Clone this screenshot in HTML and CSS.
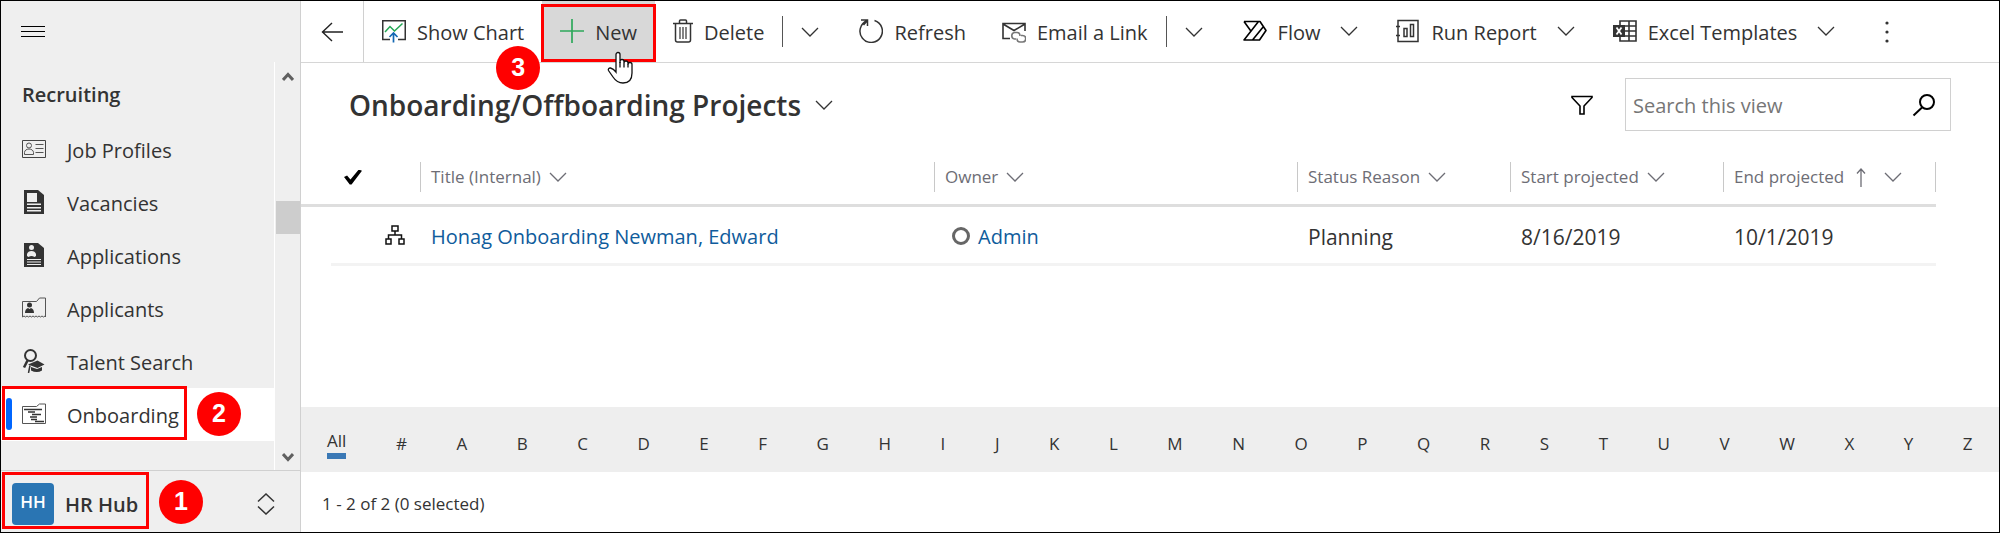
FILE: index.html
```html
<!DOCTYPE html>
<html lang="en">
<head>
  <meta charset="UTF-8">
  <meta name="viewport" content="width=device-width, initial-scale=1.0">
  <title>Onboarding/Offboarding Projects</title>
  <link rel="stylesheet" href="styles.css">
</head>
<body>
  <!-- Shared icons -->
  <svg class="sprite" aria-hidden="true">
    <symbol id="chevron" viewBox="0 0 18 10">
      <path d="M1 1l8 8 8-8" fill="none" stroke="currentColor" stroke-width="1.3"/>
    </symbol>
  </svg>

  <aside class="sidebar">
    <button class="menu-button" aria-label="Toggle navigation">
      <svg width="24" height="11" viewBox="0 0 24 11"><path d="M0 .5h24M0 5.5h24M0 10.5h24" stroke="#000"/></svg>
    </button>

    <div class="nav-scroll">
      <nav class="nav">
        <h2 class="nav-title">Recruiting</h2>
        <a class="nav-item" href="#">
          <svg class="nav-icon" viewBox="0 0 24 24" fill="none" stroke="#555">
            <path d="M.5 3.5h23v17H.5z" stroke="#444"/>
            <circle cx="7" cy="8.5" r="2.5"/>
            <path d="M2.5 17.5v-2c0-2 2-3.5 4.500-3.500s4.500 1.500 4.500 3.500v2zM13.500 7.500h8M13.500 11.500h8M13.500 15.500h8"/>
          </svg>
          Job Profiles
        </a>
        <a class="nav-item" href="#">
          <svg class="nav-icon" viewBox="0 0 24 24">
            <path d="M2 0h14l6 5v19H2z" fill="#333"/>
            <path d="M5 3h10v9H5zM5 13.500h14v1.500H5zM5 17h14v1.500H5zM5 20h14v1.500H5z" fill="#efefef"/>
          </svg>
          Vacancies
        </a>
        <a class="nav-item" href="#">
          <svg class="nav-icon" viewBox="0 0 24 24">
            <path d="M2 0h14l6 5v19H2z" fill="#333"/>
            <circle cx="9.500" cy="4.500" r="2.500" fill="#efefef"/>
            <path d="M5 13V11q1-3 4.500-3t4.500 3v2l-1.500 1q-3-2-6 0zM5 16h14v1H5zM5 18.500h14v1H5zM5 21h14v1H5z" fill="#efefef"/>
          </svg>
          Applications
        </a>
        <a class="nav-item" href="#">
          <svg class="nav-icon" viewBox="0 0 24 24">
            <path d="M.5 21V5.500h14l3-3.500h6v19" fill="none" stroke="#555"/>
            <path d="M.5 21l1.500-1 1.500 1 1.500-1 1.500 1 1.500-1 1.500 1 1.500-1 1.500 1 1.500-1 1.500 1 1.500-1 1.500 1 1.500-1 1.500 1 1.500-1" fill="none" stroke="#555"/>
            <circle cx="7.500" cy="9" r="2.500" fill="#333"/>
            <path d="M3 17q0-4 3-5l1.500 1 1.500-1q3 1 3 5z" fill="#333"/>
          </svg>
          Applicants
        </a>
        <a class="nav-item" href="#">
          <svg class="nav-icon" viewBox="0 0 24 24">
            <circle cx="8.500" cy="6.500" r="5.500" fill="none" stroke="#333" stroke-width="2"/>
            <path d="M5.500 11.500L2 18.500" stroke="#333" stroke-width="2.500"/>
            <path d="M6 15.500l9.500-4 7 4-7 3.500zM9 18v3.500q6 3 11 0V18l-5 2z" fill="#333"/>
            <path d="M8 16.500L6.500 24" stroke="#333" stroke-width="1.500"/>
          </svg>
          Talent Search
        </a>
        <a class="nav-item selected" href="#">
          <svg class="nav-icon" viewBox="0 0 24 24">
            <path d="M.5 21.500v-17h14l3-2.500h6v19.500z" fill="none" stroke="#555"/>
            <path d="M2 7.500h18M6 10h7M10 12.500h9M8 15h7M9 17.500h6M13 19.500h9" stroke="#333" stroke-width="1.500"/>
          </svg>
          Onboarding
          <span class="marker"></span>
          <span class="step step-nav">2</span>
        </a>
      </nav>
      <div class="scrollbar">
        <svg width="12" height="10" viewBox="0 0 12 10"><path d="M1 8l5-5.500L11 8" fill="none" stroke="#606060" stroke-width="3"/></svg>
        <span class="thumb"></span>
        <svg width="12" height="10" viewBox="0 0 12 10"><path d="M1 2l5 5.500L11 2" fill="none" stroke="#606060" stroke-width="3"/></svg>
      </div>
    </div>

    <button class="area-switch">
      <span class="area-tile">HH</span>
      <span class="area-name">HR Hub</span>
      <svg class="area-arrows" width="18" height="22" viewBox="0 0 18 22"><path d="M1 8.500l8-7.500 8 7.500M1 13.500l8 7.500 8-7.500" fill="none" stroke="#333" stroke-width="1.500"/></svg>
      <span class="marker"></span>
      <span class="step step-area">1</span>
    </button>
  </aside>

  <main class="content">
    <div class="toolbar">
      <button class="back" aria-label="Back">
        <svg width="22" height="20" viewBox="0 0 22 20"><path d="M22 10H1M11 1L1.500 10l9.500 9" fill="none" stroke="#222" stroke-width="1.400"/></svg>
      </button>
      <button class="command">
        <svg class="icon" viewBox="0 0 24 24" fill="none">
          <path d="M8 20.500H.75V1.750h22.500V20.500H16" stroke="#333" stroke-width="1.500"/>
          <path d="M3 13l5-5.500 4.500 4.500 8-7.500" stroke="#22a653" stroke-width="1.500"/>
          <path d="M11.500 23.500v-9M7.500 18l4-4 4 4" stroke="#1468b3" stroke-width="1.700"/>
        </svg>
        Show Chart
      </button>
      <button class="command active">
        <svg class="icon" viewBox="0 0 24 24"><path d="M12 0v24M0 12h24" stroke="#2ea85b" stroke-width="1.700"/></svg>
        New
        <span class="marker"></span>
        <span class="step step-new">3</span>
        <svg class="pointer" width="26" height="33" viewBox="0 0 26 33">
          <path d="M9 20V3.500a2 2 0 0 1 4 0V12v-1.500a2 2 0 0 1 4 0V12a2 2 0 0 1 4 0v1.500a2 2 0 0 1 4 0V22c0 6-3 10-9 10-5 0-8-3-10-6l-4.500-6.500c-.7-1.500.5-2.700 2-2.500 2.500.5 4 2 5.500 4z" fill="#fff" stroke="#111" stroke-width="1.300"/>
          <path d="M13 11v5.500M17 12v4.500M21 13v3.500" stroke="#111" stroke-width="1.300"/>
        </svg>
      </button>
      <button class="command">
        <svg class="icon icon-narrow" viewBox="0 0 20 24" fill="none" stroke="#333" stroke-width="1.500">
          <path d="M0 4.500h20M6.500 4V2q0-1 1-1h5q1 0 1 1v2M2.500 5v16q0 2 2 2h11q2 0 2-2V5"/>
          <path d="M7 8v12M10 8v12M13 8v12" stroke-width="1.200"/>
        </svg>
        Delete
      </button>
      <span class="divider"></span>
      <button class="split" aria-label="More delete options"><svg class="chevron"><use href="#chevron"/></svg></button>
      <button class="command">
        <svg class="icon" viewBox="0 0 24 24" fill="none" stroke="#333" stroke-width="1.500">
          <path d="M15.500 1.500A11.200 11.200 0 1 1 8 1.800M2 1h6.500v6M8.500 1.500L4.500 6"/>
        </svg>
        Refresh
      </button>
      <button class="command">
        <svg class="icon" viewBox="0 0 24 24" fill="none" stroke="#333" stroke-width="1.600">
          <path d="M8 19.500H1V4.500h22V12M1 5l11 6.500L23 5"/>
          <path d="M14 20h-1.500a3.300 3.300 0 0 1 0-6.500H15q3 0 3 3.500M19 16.500h1.500a3.200 3.200 0 0 1 0 6.500H18q-3 0-3-3.500" stroke="#777"/>
        </svg>
        Email a Link
      </button>
      <span class="divider"></span>
      <button class="split" aria-label="More email options"><svg class="chevron"><use href="#chevron"/></svg></button>
      <button class="command has-menu">
        <svg class="icon" viewBox="0 0 24 24" fill="none" stroke="#000" stroke-width="1.600" stroke-linejoin="round">
          <path d="M1 2.500h16l6 9-6.500 9.500H1L15.500 2.500M1 2.500l6.500 9M20.500 7.500L9.500 21"/>
        </svg>
        Flow
        <svg class="chevron"><use href="#chevron"/></svg>
      </button>
      <button class="command has-menu">
        <svg class="icon" viewBox="0 0 24 24" fill="none" stroke="#333" stroke-width="1.500">
          <path d="M2 1.500h20v21H2zM0 7.500h4M0 16.500h4M8 9.500h3v8H8zM14.500 5.500h3v12h-3z"/>
        </svg>
        Run Report
        <svg class="chevron"><use href="#chevron"/></svg>
      </button>
      <button class="command has-menu">
        <svg class="icon" viewBox="0 0 24 24" fill="none" stroke="#333" stroke-width="1.600">
          <path d="M7 2h16v20H7zM7 7h16M7 12h16M7 17h16M16 2v20"/>
          <path d="M0 6h12v12H0z" fill="#333" stroke="none"/>
          <path d="M3.500 8.500l5 7M8.500 8.500l-5 7" stroke="#fff" stroke-width="1.800"/>
        </svg>
        Excel Templates
        <svg class="chevron"><use href="#chevron"/></svg>
      </button>
      <button class="overflow" aria-label="More commands">
        <svg width="4" height="22" viewBox="0 0 4 22" fill="#333"><circle cx="2" cy="2" r="1.600"/><circle cx="2" cy="11" r="1.600"/><circle cx="2" cy="20" r="1.600"/></svg>
      </button>
    </div>

    <div class="view-header">
      <h1><button class="view-picker">Onboarding/Offboarding Projects <svg class="chevron"><use href="#chevron"/></svg></button></h1>
      <button class="filter" aria-label="Filter">
        <svg width="22" height="20" viewBox="0 0 22 20"><path d="M1 1.500h20v1L13 11v8H9v-8L1 2.500z" fill="none" stroke="#000" stroke-width="1.600"/></svg>
      </button>
      <form class="search">
        <input type="search" placeholder="Search this view" aria-label="Search this view">
        <button type="button" aria-label="Search">
          <svg width="24" height="24" viewBox="0 0 24 24"><circle cx="15" cy="9" r="7" fill="none" stroke="#000" stroke-width="2"/><path d="M10 14.500L1.500 22.500" stroke="#000" stroke-width="2"/></svg>
        </button>
      </form>
    </div>

    <table class="grid">
      <colgroup>
        <col class="col-gutter">
        <col class="col-check">
        <col>
        <col class="col-owner">
        <col class="col-data">
        <col class="col-data">
        <col class="col-data">
      </colgroup>
      <thead>
        <tr>
          <td></td>
          <td><input class="select-all" type="checkbox" aria-label="Select all"></td>
          <th><button>Title (Internal) <svg class="chevron"><use href="#chevron"/></svg></button></th>
          <th><button>Owner <svg class="chevron"><use href="#chevron"/></svg></button></th>
          <th><button>Status Reason <svg class="chevron"><use href="#chevron"/></svg></button></th>
          <th><button>Start projected <svg class="chevron"><use href="#chevron"/></svg></button></th>
          <th class="last"><button>End projected
            <svg class="sort" width="10" height="19" viewBox="0 0 10 19"><path d="M5 19V1M1 5.500L5 1l4 4.500" fill="none" stroke="currentColor" stroke-width="1.300"/></svg>
            <svg class="chevron"><use href="#chevron"/></svg></button></th>
        </tr>
      </thead>
      <tbody>
        <tr>
          <td class="gutter"></td>
          <td class="hierarchy">
            <svg width="20" height="20" viewBox="0 0 20 20" fill="none" stroke="#111" stroke-width="1.500"><path d="M7 1h6v5H7zM1 14h5v5H1zM14 14h5v5h-5zM10 6v4M3.500 14v-4h13v4"/></svg>
          </td>
          <td><a href="#">Honag Onboarding Newman, Edward</a></td>
          <td><span class="presence"></span><a href="#">Admin</a></td>
          <td class="value">Planning</td>
          <td class="value">8/16/2019</td>
          <td class="value">10/1/2019</td>
        </tr>
      </tbody>
    </table>

    <div class="jump-bar">
      <a class="current" href="#">All</a>
      <a href="#">#</a>
      <a href="#">A</a>
      <a href="#">B</a>
      <a href="#">C</a>
      <a href="#">D</a>
      <a href="#">E</a>
      <a href="#">F</a>
      <a href="#">G</a>
      <a href="#">H</a>
      <a href="#">I</a>
      <a href="#">J</a>
      <a href="#">K</a>
      <a href="#">L</a>
      <a href="#">M</a>
      <a href="#">N</a>
      <a href="#">O</a>
      <a href="#">P</a>
      <a href="#">Q</a>
      <a href="#">R</a>
      <a href="#">S</a>
      <a href="#">T</a>
      <a href="#">U</a>
      <a href="#">V</a>
      <a href="#">W</a>
      <a href="#">X</a>
      <a href="#">Y</a>
      <a href="#">Z</a>
    </div>
    <footer class="status">1 - 2 of 2 (0 selected)</footer>
  </main>
</body>
</html>
```
FILE: styles.css
```css
/* Base styles */
* {
  box-sizing: border-box;
}

body {
  margin: 0;
  min-height: 100vh;
  display: grid;
  grid-template-columns: 300px 1fr;
  border: 1px solid #000;
  background: #fff;
  color: #333;
  font-family: "Segoe UI", "Open Sans", sans-serif;
  font-size: 20px;
  line-height: 28px;
}

button {
  margin: 0;
  padding: 0;
  border: 0;
  background: none;
  color: inherit;
  font: inherit;
  white-space: nowrap;
  cursor: pointer;
}

a {
  color: inherit;
  text-decoration: none;
}

svg {
  display: block;
  flex: none;
}

.sprite {
  position: absolute;
  width: 0;
  height: 0;
}

.chevron {
  width: 18px;
  height: 10px;
}

/* Sidebar */
.sidebar {
  display: flex;
  flex-direction: column;
  background: #efefef;
  border-right: 1px solid #d0d0d0;
}

.menu-button {
  align-self: flex-start;
  height: 61px;
  padding: 0 20px;
}

.nav-scroll {
  flex: 1;
  display: flex;
}

.nav {
  flex: 1;
  padding-bottom: 29px;
}

.nav-title {
  margin: 0;
  padding: 19px 21px 14px;
  font-size: 20px;
  font-weight: 600;
}

.nav-item {
  position: relative;
  display: flex;
  align-items: center;
  gap: 21px;
  height: 53px;
  padding: 3px 0 0 21px;
}

.nav-icon {
  width: 24px;
  height: 24px;
  margin-bottom: 4px;
}

.nav-item.selected {
  background: #fff;
}

.nav-item.selected::before {
  content: "";
  position: absolute;
  left: 5px;
  top: 10px;
  bottom: 11px;
  width: 6px;
  border-radius: 3px;
  background: #0066ff;
}

.scrollbar {
  width: 26px;
  display: flex;
  flex-direction: column;
  align-items: center;
  padding: 10px 0 8px;
  border-left: 1px solid #fff;
}

.thumb {
  width: 24px;
  height: 33px;
  margin: 119px 0 auto;
  background: #cdcdcd;
}

.area-switch {
  position: relative;
  display: flex;
  align-items: center;
  gap: 11px;
  height: 62px;
  padding: 4px 25px 0 11px;
  border-top: 1px solid #d0d0d0;
}

.area-tile {
  width: 42px;
  height: 42px;
  border-radius: 4px;
  background: #2a75b3;
  color: #fff;
  font-size: 17px;
  font-weight: 600;
  line-height: 38px;
}

.area-name {
  padding-top: 3px;
  font-weight: 600;
}

.area-arrows {
  margin-left: auto;
}

/* Walkthrough markers */
.marker {
  position: absolute;
  border: 3px solid #f00;
}

.nav-item .marker {
  left: 1px;
  top: -2px;
  width: 185px;
  bottom: 1px;
}

.area-switch .marker {
  left: 1px;
  top: 1px;
  width: 147px;
  bottom: 3px;
}

.command .marker {
  inset: 3px -1px 0;
}

.step {
  position: absolute;
  width: 44px;
  height: 44px;
  border-radius: 50%;
  background: #f00;
  color: #fff;
  font: bold 25px/42px "Liberation Sans", sans-serif;
  text-align: center;
}

.step-nav {
  left: 196px;
  top: 4px;
}

.step-area {
  left: 158px;
  top: 9px;
}

.step-new {
  left: -46px;
  top: 45px;
}

.pointer {
  position: absolute;
  right: 22px;
  top: 50px;
}

/* Toolbar */
.content {
  display: flex;
  flex-direction: column;
  min-width: 0;
}

.toolbar {
  display: flex;
  align-items: center;
  height: 62px;
  border-bottom: 1px solid #d6d6d6;
}

.back {
  height: 61px;
  padding: 0 20px;
  border-right: 1px solid #d0d0d0;
}

.command {
  position: relative;
  display: flex;
  align-items: center;
  gap: 11px;
  height: 61px;
  padding: 2px 18px 0;
}

.command.active {
  background: #d8d8d8;
}

.command.has-menu {
  padding-right: 20px;
}

.command .chevron {
  margin: 0 0 3px 9px;
}

.icon {
  width: 24px;
  height: 24px;
  margin-bottom: 3px;
}

.icon-narrow {
  width: 20px;
}

.divider {
  width: 1px;
  height: 31px;
  background: #555;
}

.split {
  height: 61px;
  padding: 0 22px 0 18px;
}

.overflow {
  height: 61px;
  padding: 0 30px;
}

/* View title and search */
.view-header {
  display: flex;
  align-items: center;
  padding: 15px 48px 31px;
}

.view-header h1 {
  flex: 1;
  margin: 0;
  font-size: 28px;
  font-weight: 600;
}

.view-picker {
  display: flex;
  align-items: center;
  gap: 14px;
}

.filter {
  margin-right: 32px;
}

.search {
  display: flex;
  width: 326px;
  height: 53px;
  border: 1px solid #d0d0d0;
}

.search input {
  flex: 1;
  min-width: 0;
  padding: 2px 7px 0;
  border: 0;
  outline: 0;
  background: none;
  font: inherit;
}

.search input::placeholder {
  color: #767676;
}

.search button {
  padding: 0 14px;
}

/* Grid */
.grid {
  width: calc(100% - 63px);
  table-layout: fixed;
  border-collapse: separate;
  border-spacing: 0;
}

.col-gutter {
  width: 30px;
}

.col-check {
  width: 89px;
}

.col-owner {
  width: 363px;
}

.col-data {
  width: 213px;
}

.grid th,
.grid td {
  padding: 0;
  text-align: left;
}

.grid thead th,
.grid thead td {
  padding-bottom: 12px;
  border-bottom: 3px solid #dedede;
}

.grid th button {
  display: flex;
  align-items: center;
  gap: 8px;
  width: 100%;
  height: 30px;
  padding-left: 10px;
  border-left: 1px solid #c8c8c8;
  color: #6d6d75;
  font-size: 17px;
  font-weight: 400;
}

.grid th.last button {
  border-right: 1px solid #c8c8c8;
}

.sort {
  margin: 0 10px 0 4px;
}

.select-all {
  appearance: none;
  display: block;
  width: 18px;
  height: 15px;
  margin: 0 0 0 13px;
  background: #000;
  clip-path: polygon(0 50%, 17% 40%, 36% 66%, 82% 0, 100% 9%, 42% 100%, 32% 100%);
}

.grid tbody td {
  height: 59px;
  padding: 3px 0 0 11px;
  border-bottom: 3px solid #f3f3f3;
}

.grid tbody .gutter {
  border: 0;
}

.grid tbody .hierarchy {
  padding: 0 0 0 54px;
}

.grid tbody .value {
  font-size: 21px;
}

.grid tbody a {
  color: #0f5c9c;
}

.presence {
  display: inline-block;
  width: 18px;
  height: 18px;
  margin: 0 8px 0 7px;
  border: 3px solid #666;
  border-radius: 50%;
  vertical-align: -1px;
}

/* Jump bar and status */
.jump-bar {
  display: flex;
  align-items: center;
  justify-content: space-between;
  height: 65px;
  margin-top: auto;
  padding: 8px 26px 0;
  background: #eee;
  font-size: 17px;
}

.jump-bar .current {
  border-bottom: 6px solid #3a78b5;
  line-height: 24px;
}

.status {
  height: 60px;
  padding: 2px 21px 0;
  font-size: 17px;
  line-height: 60px;
}
```
